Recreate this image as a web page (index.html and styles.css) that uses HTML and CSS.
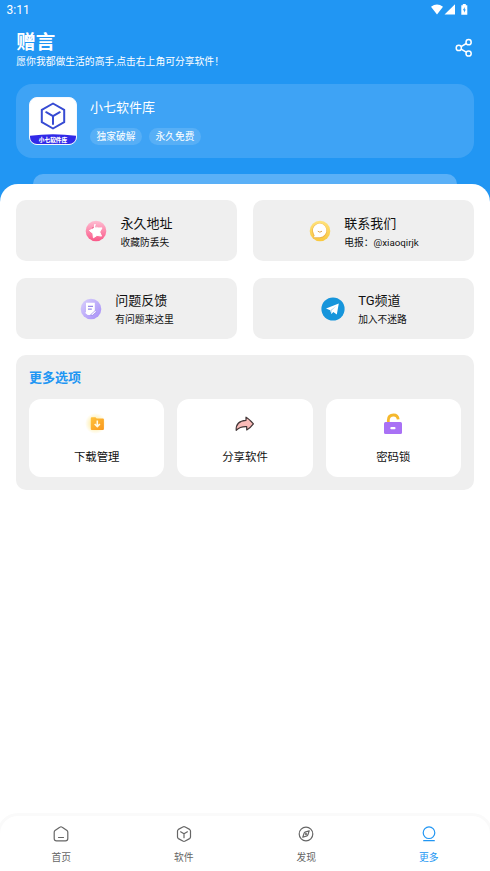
FILE: index.html
```html
<!DOCTYPE html>
<html lang="zh-CN">
<head>
<meta charset="utf-8">
<title>更多</title>
<link rel="stylesheet" href="styles.css">
</head>
<body>
<div class="app">
  <header class="hero">
    <div class="status">
      <span>3:11</span>
      <svg width="38" height="12" viewBox="0 0 38 12" fill="#fff"><path d="M0 2.8Q6-2 12 2.8L6 10.5zM24 .2V10.5H13.5zM30.3 1.2h1.5V0h3v1.2h1.5v9.6h-6z"/><path d="M33.7 3L31.9 6.3h1.2v2.5l1.7-3.4h-1.1z" fill="#2196f3"/></svg>
    </div>
    <div class="heading">
      <div>
        <h1>赠言</h1>
        <p>愿你我都做生活的高手,点击右上角可分享软件！</p>
      </div>
      <svg class="share" width="18" height="20" viewBox="0 0 18 20" fill="none" stroke="#fff" stroke-width="1.5"><circle cx="3.8" cy="9.9" r="2.6"/><circle cx="13.6" cy="4.2" r="2.6"/><circle cx="13.6" cy="15.5" r="2.6"/><path d="M6.1 8.6L11.3 5.5M6.1 11.2L11.3 14.2"/></svg>
    </div>
    <section class="profile">
      <div class="logo">
        <svg width="48" height="48" viewBox="0 0 48 48"><path d="M0 39Q24 35.5 48 39V48H0z" fill="#3029e8"/><g fill="none" stroke="#374bd3" stroke-width="2" stroke-linejoin="round" stroke-linecap="round"><path d="M24 6.5L35.2 12.8V25.2L24 31.5L12.8 25.2V12.8z"/><path d="M17.2 15.2L24 19.2L30.8 15.2M24 19.2V27"/></g><text class="logo-text" x="24" y="45">小七软件库</text></svg>
      </div>
      <div>
        <h2>小七软件库</h2>
        <div class="tags"><span>独家破解</span><span>永久免费</span></div>
      </div>
    </section>
    <div class="strip"></div>
  </header>
  <main class="sheet">
    <div class="features">
      <article class="feature first">
        <svg width="22" height="22" viewBox="0 0 22 22"><defs><linearGradient id="pink" x2="0" y2="1"><stop stop-color="#ffbdd2"/><stop offset="1" stop-color="#f95888"/></linearGradient></defs><circle cx="11" cy="11" r="10.3" fill="url(#pink)"/><path d="M9.9 4.2L12.4 8L17 7.9L14.7 12L16.5 16.1L12 15.4L8.4 17.8L7.9 13.4L4.4 10.5L8.6 8.8z" fill="#fff" stroke="#fff" stroke-linejoin="round"/><path d="M7 8.1l2-1.1M11 5.4v2" stroke="#ed6792"/></svg>
        <div><h3>永久地址</h3><p>收藏防丢失</p></div>
      </article>
      <article class="feature">
        <svg width="22" height="22" viewBox="0 0 22 22"><defs><linearGradient id="gold" x2="0" y2="1"><stop stop-color="#ffe27c"/><stop offset="1" stop-color="#f9c83e"/></linearGradient></defs><circle cx="11" cy="11" r="10.3" fill="url(#gold)"/><path d="M4.5 15a7.4 7.4 0 1 1 5.8 3.2H4.2z" fill="#eeb44b"/><path d="M5 14.2a6.8 6.8 0 1 1 5.8 3H4.5l1.2-1.5z" fill="#fff"/><path d="M8.8 11.2q2 2 4.2 0" fill="none" stroke="#dba452"/></svg>
        <div><h3>联系我们</h3><p>电报：@xiaoqirjk</p></div>
      </article>
      <article class="feature">
        <svg width="22" height="22" viewBox="0 0 22 22"><defs><linearGradient id="violet" x2="1" y2="1"><stop stop-color="#d9d1fc"/><stop offset="1" stop-color="#a58cf7"/></linearGradient></defs><circle cx="11" cy="11" r="10.3" fill="url(#violet)"/><path d="M6 4.7h8.8v9L11 17H7.7L4.7 14.6H6z" fill="#fff"/><path d="M8 8.3h5M8 11.2h3.8" stroke="#9788e8" stroke-width="1.2"/><path d="M10.5 16.8l4.7-4.2 1.3 1.2-4 3.5z" fill="#fff" stroke="#8c75e6" stroke-width=".6"/></svg>
        <div><h3>问题反馈</h3><p>有问题来这里</p></div>
      </article>
      <article class="feature">
        <svg width="24" height="24" viewBox="0 0 24 24"><circle cx="12" cy="12" r="11.6" fill="#1695db"/><path d="M5 11.6L17.8 6.6L15.8 17.4L12.3 14.9L10.5 17L9.2 13.2z" fill="#fff"/><path d="M9.2 13.2L15.5 8.8L10.8 13.6L10.5 17" fill="#b7d9ed"/></svg>
        <div><h3>TG频道</h3><p>加入不迷路</p></div>
      </article>
    </div>
    <section class="options">
      <h2>更多选项</h2>
      <div class="tiles">
        <div class="tile"><svg width="26" height="26" viewBox="0 0 26 26"><defs><linearGradient id="folder" x2="1" y2="1"><stop stop-color="#ffc23b"/><stop offset="1" stop-color="#fa981e"/></linearGradient><radialGradient id="glow"><stop stop-color="#ffe57c"/><stop offset="1" stop-color="#ffe57c" stop-opacity="0"/></radialGradient></defs><circle cx="11.5" cy="12.5" r="10.5" fill="url(#glow)"/><path d="M6.8 7.2q0-1 1-1h3.6l1.3 1.3h6.2q1 0 1 1v9.6q0 1-1 1H7.8q-1 0-1-1z" fill="url(#folder)"/><path d="M13.3 9.5v6M10.7 13l2.6 2.7 2.6-2.7" fill="none" stroke="#fffbe6" stroke-width="1.6"/></svg><span>下载管理</span></div>
        <div class="tile"><svg width="26" height="26" viewBox="0 0 26 26"><path d="M4.2 19.3Q3.6 10 14 9.3V6.2Q16.8 7.7 21.4 12.8Q18.6 16.6 14.7 18.9V15.7Q8 15.4 4.2 19.3z" fill="#fabbb8" stroke="#423637" stroke-width="1.2" stroke-linejoin="round"/></svg><span>分享软件</span></div>
        <div class="tile"><svg width="26" height="26" viewBox="0 0 26 26"><path d="M8.3 13V9.3Q8.3 4 13.6 4Q17.7 4 18.2 8.4" fill="none" stroke="#f5b82d" stroke-width="2.8"/><rect x="4" y="11" width="18" height="12" rx="1.5" fill="#a971f5"/><rect x="10.3" y="16" width="5.2" height="2.2" rx="1" fill="#fff"/></svg><span>密码锁</span></div>
      </div>
    </section>
  </main>
  <nav class="tabs">
    <div class="tab"><svg width="18" height="18" viewBox="0 0 18 18"><path d="M2.2 7.2Q2.2 6.2 3 5.6L7.8 2.2Q9 1.3 10.2 2.2L15 5.6Q15.8 6.2 15.8 7.2V13.5Q15.8 15.8 13.5 15.8H4.5Q2.2 15.8 2.2 13.5zM6.5 12.5h5"/></svg><span>首页</span></div>
    <div class="tab"><svg width="18" height="18" viewBox="0 0 18 18"><path d="M9 1.7Q9.6 1.7 10.2 2L14.6 4.4Q15.5 5 15.5 6V12Q15.5 13 14.6 13.6L10.2 16Q9 16.6 7.8 16L3.4 13.6Q2.5 13 2.5 12V6Q2.5 5 3.4 4.4L7.8 2Q8.4 1.7 9 1.7zM5.6 6.8L9 8.8L12.4 6.8M9 8.8V12.7"/></svg><span>软件</span></div>
    <div class="tab"><svg width="18" height="18" viewBox="0 0 18 18"><circle cx="9" cy="9" r="6.8"/><path d="M12.2 5.8L10.8 10.1Q10.5 10.7 9.9 10.9L5.8 12.2L7.2 7.9Q7.5 7.3 8.1 7.1z"/><circle cx="9" cy="9" r=".5"/></svg><span>发现</span></div>
    <div class="tab active"><svg width="18" height="18" viewBox="0 0 18 18"><circle cx="9" cy="7.7" r="5.8"/><path d="M3.7 15.7H14.3"/></svg><span>更多</span></div>
  </nav>
</div>
</body>
</html>
```
FILE: styles.css
```css
* { box-sizing: border-box; }
body { margin: 0; font-family: Roboto, "Noto Sans CJK SC", sans-serif; background: #fff; color: #111; }
h1, h2, h3, p { margin: 0; font-weight: 400; }
svg { display: block; flex: none; }
.app { height: 871px; display: flex; flex-direction: column; overflow: hidden; background: #fff; }
.hero { height: 204px; flex: none; color: #fff; background: #2196f3; }
.status { height: 30px; padding: 4px 21px 0 6.5px; display: flex; justify-content: space-between; font-size: 12px; line-height: 13px; }
.heading { height: 54px; padding: 0 17px 0 16.3px; display: flex; justify-content: space-between; }
.heading h1 { font-size: 19.5px; font-weight: 700; line-height: 25px; }
.heading p { font-size: 9.8px; line-height: 14px; }
.share { margin-top: 8px; }
.profile { height: 74px; margin: 0 16px; padding: 13px; border-radius: 16px; background: #3ea3f5; display: flex; gap: 13px; }
.logo { width: 48px; height: 48px; border-radius: 8px; overflow: hidden; background: #fff; border: 1px solid #f5f8ff; }
.logo svg { margin: -1px; }
.logo-text { font-size: 5.7px; font-weight: 900; fill: #fff; text-anchor: middle; }
.profile h2 { font-size: 13px; line-height: 20px; padding-top: 1px; }
.tags { display: flex; gap: 7px; margin-top: 10px; }
.tags span { height: 17px; padding: 0 6.5px; border-radius: 9px; background: #57aff6; font-size: 9.75px; line-height: 18px; }
.strip { height: 28px; margin: 16px 33px 0; border-radius: 10px; background: #5ab0f7; }
.sheet { position: relative; flex: 1; margin-top: -20px; padding: 16px; border-radius: 18px 18px 0 0; background: #fff; }
.features { display: grid; grid-template-columns: 1fr 1fr; gap: 16.5px 16px; }
.feature { height: 61px; padding: 2px 0 0 1px; border-radius: 10px; background: #efefef; display: flex; align-items: center; justify-content: center; gap: 13px; }
.feature.first { padding-left: 5px; }
.feature svg { margin-top: -1px; }
.feature h3 { font-size: 13px; line-height: 20px; }
.feature p { font-size: 9.75px; line-height: 14px; margin-top: 2px; }
.options { height: 135px; margin-top: 16.5px; padding: 13px 13px 0; border-radius: 10px; background: #efefef; }
.options h2 { color: #2196f3; font-size: 13px; font-weight: 700; line-height: 20px; }
.tiles { display: grid; grid-template-columns: repeat(3, 1fr); gap: 13px; margin-top: 11px; }
.tile { height: 78px; padding-top: 12px; border-radius: 12px; background: #fff; display: flex; flex-direction: column; align-items: center; gap: 12px; font-size: 11.4px; line-height: 17px; }
.tabs { height: 55px; flex: none; display: grid; grid-template-columns: repeat(4, 1fr); border-radius: 18px 18px 0 0; background: #fff; box-shadow: 0 0 0 3px #fafafa; position: relative; }
.tab { display: flex; flex-direction: column; align-items: center; padding-top: 9px; gap: 8px; color: #666; font-size: 9.8px; line-height: 14px; }
.tab svg { fill: none; stroke: currentColor; stroke-width: 1.2; stroke-linecap: round; stroke-linejoin: round; }
.tab.active { color: #2196f3; }
```
